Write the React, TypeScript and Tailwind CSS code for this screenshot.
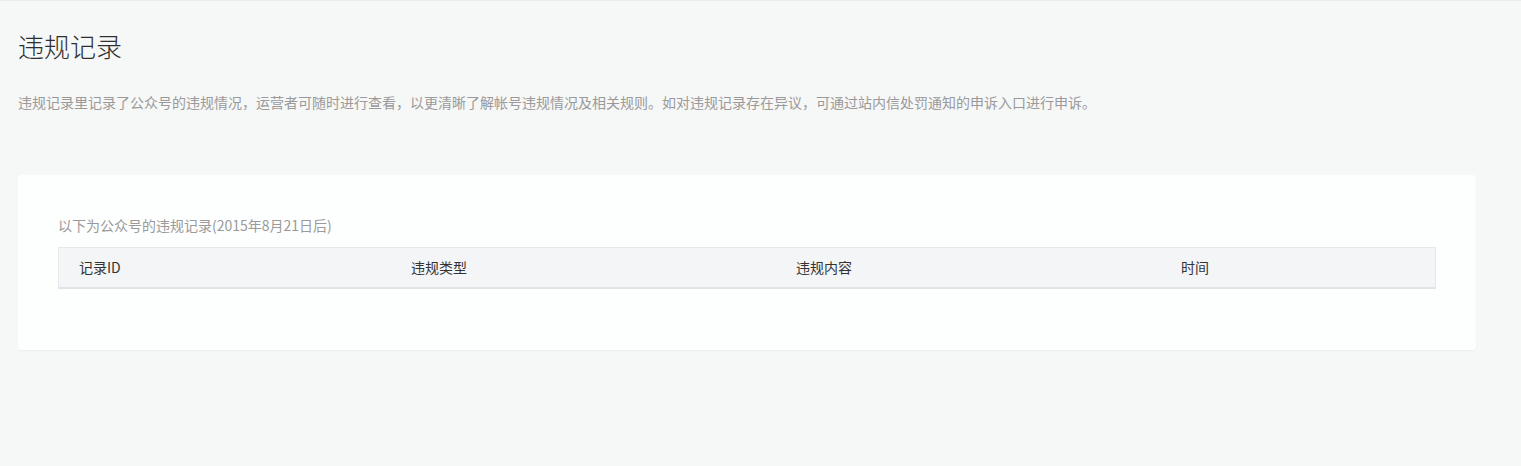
import React from "react"

const columns = [
    {label: "记录ID", width: "w-[332px]"},
    {label: "违规类型", width: "w-[385px]"},
    {label: "违规内容", width: "w-[385px]"},
    {label: "时间", width: "flex-1"},
]

export default function App() {
    return (
        <div
            className="min-h-[466px] bg-[#f6f7f7] border-t border-[#ececec] pl-[18px]"
            style={{fontFamily: '"Noto Sans CJK SC", "Noto Sans", sans-serif'}}
        >
            <h1 className="pt-[27px] text-[26px] leading-[36px] font-light text-[#2f2f2f]">
                违规记录
            </h1>
            <p className="mt-[28px] text-[14px] leading-[20px] text-[#9a9a9a]">
                违规记录里记录了公众号的违规情况，运营者可随时进行查看，以更清晰了解帐号违规情况及相关规则。如对违规记录存在异议，可通过站内信处罚通知的申诉入口进行申诉。
            </p>

            <div className="mt-[63px] w-[1458px] rounded-[3px] bg-[#fdfefe] shadow-[0_1px_2px_rgba(0,0,0,0.04)] px-[40px] pt-[40px] pb-[61px]">
                <div className="text-[14px] leading-[20px] text-[#9a9a9a]">
                    以下为公众号的违规记录(2015年8月21日后)
                </div>
                <div className="mt-[12px] flex h-[42px] items-center border border-b-2 border-[#e6e7ea] border-b-[#e1e3e6] bg-[#f4f5f7] pl-[20px] text-[14px] text-[#333]">
                    {columns.map((col) => (
                        <div key={col.label} className={col.width}>
                            {col.label}
                        </div>
                    ))}
                </div>
            </div>
        </div>
    )
}
